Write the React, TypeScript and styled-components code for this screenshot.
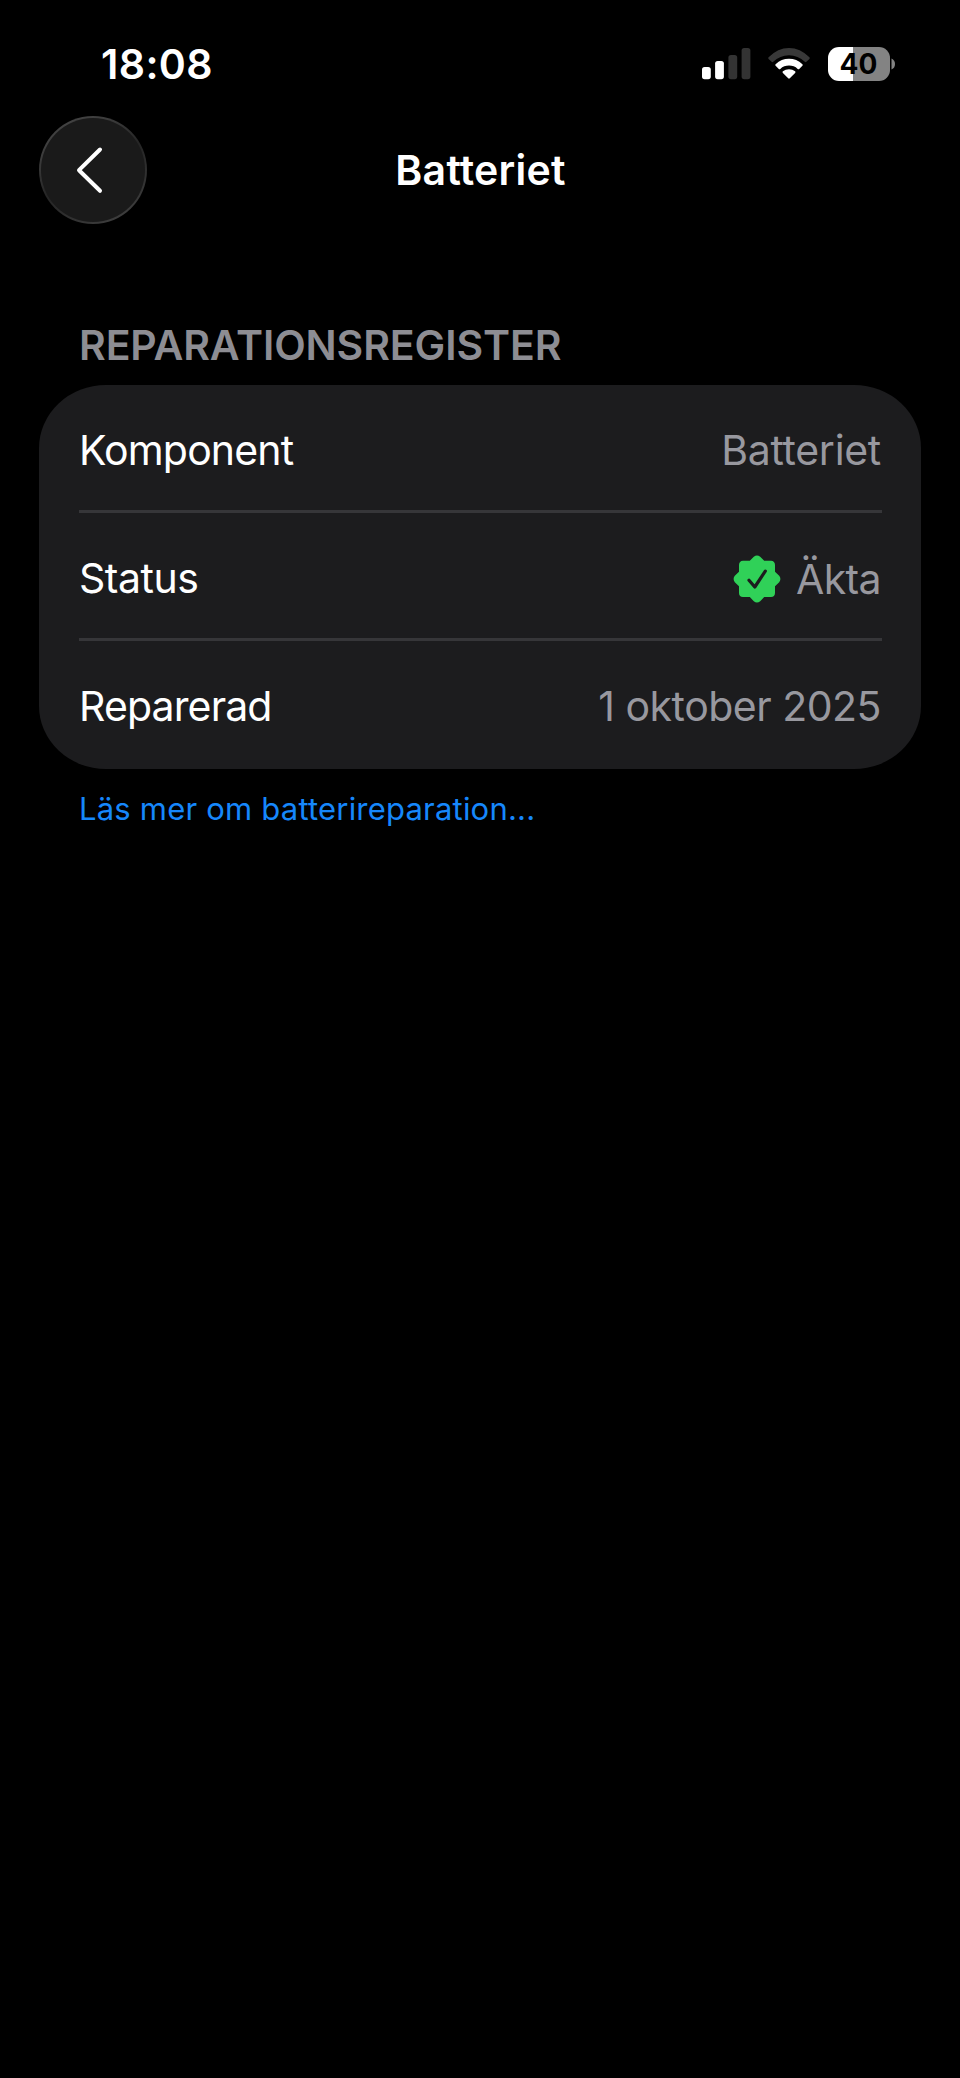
import React from "react";
import styled, { createGlobalStyle } from "styled-components";

const GlobalStyle = createGlobalStyle`
  * { box-sizing: border-box; }
  html, body { margin: 0; background: #000; }
  body {
    color: #fff;
    font-family: Inter, "Liberation Sans", sans-serif;
    font-size: 41px;
  }
`;

const Screen = styled.main`
  display: flex;
  flex-direction: column;
  width: 960px;
  min-height: 2078px;
  background: #000;
`;

const StatusBar = styled.header`
  display: flex;
  align-items: center;
  justify-content: space-between;
  height: 108px;
  padding: 40px 64px 20px 101px;
`;

const Time = styled.time`
  font-weight: 600;
  line-height: 48px;
  letter-spacing: 0.4px;
`;

const Indicators = styled.div`
  display: flex;
  align-items: center;
`;

const CellularIcon = styled.svg`
  width: 49px;
  height: 34px;
  margin-right: 16px;
`;

const WifiIcon = styled.svg`
  width: 44px;
  height: 34px;
  margin-right: 17px;
`;

const Battery = styled.div`
  display: flex;
  align-items: center;
`;

const BatteryBody = styled.div`
  display: flex;
  align-items: center;
  justify-content: center;
  width: 62px;
  height: 34px;
  border-radius: 11px;
  background: linear-gradient(to right, #fff 25px, #838383 25px);
  color: #000;
  font-size: 28px;
  font-weight: 700;
  line-height: 34px;
`;

const BatteryTip = styled.svg`
  width: 5px;
  height: 12px;
  margin-left: 1.5px;
`;

const NavBar = styled.nav`
  display: grid;
  grid-template-columns: 109px 1fr 109px;
  align-items: center;
  height: 124px;
  padding: 0 39px;
`;

const BackButton = styled.button`
  display: flex;
  align-items: center;
  justify-content: center;
  width: 108px;
  height: 108px;
  padding: 0;
  border: 0;
  border-radius: 50%;
  background: linear-gradient(150deg, #484848 0%, #3c3c3c 25%, #252525 50%, #333 75%, #484848 100%);
`;

const BackFace = styled.span`
  display: flex;
  flex: none;
  align-items: center;
  justify-content: center;
  width: 104px;
  height: 104px;
  border-radius: 50%;
  background: #1a1a1a;
`;

const ChevronIcon = styled.svg`
  width: 32px;
  height: 50px;
  margin-right: 6px;
`;

const Title = styled.h1`
  margin: 0;
  padding-left: 1px;
  font-size: 41px;
  font-weight: 600;
  line-height: 50px;
  letter-spacing: 0.23px;
  text-align: center;
`;

const Section = styled.section`
  display: flex;
  flex-direction: column;
  padding: 88px 39px 0;
`;

const SectionHeading = styled.h2`
  margin: 0 0 15px;
  padding-left: 40px;
  color: #8d8d93;
  font-size: 41px;
  font-weight: 600;
  line-height: 50px;
  letter-spacing: -0.1px;
`;

const Card = styled.dl`
  margin: 0;
  padding: 0 39px 0 40px;
  width: 882px;
  height: 384px;
  border-radius: 67px / 63px;
  background: #1c1c1e;
`;

const Row = styled.div`
  display: flex;
  align-items: center;
  justify-content: space-between;
  height: 128px;
  padding-top: 4px;
  border-bottom: 3px solid #363639;

  &:last-child {
    border-bottom: 0;
    padding-top: 1px;
  }
`;

const Label = styled.dt<{ $tracking: number }>`
  line-height: 50px;
  letter-spacing: ${(p) => p.$tracking}px;
`;

const Value = styled.dd<{ $tracking: number; $drop?: number }>`
  display: flex;
  align-items: center;
  margin: 0;
  padding: ${(p) => (p.$drop ?? 0) * 2}px 1px 0 0;
  color: #98989f;
  line-height: 50px;
  letter-spacing: ${(p) => p.$tracking}px;
`;

const SealIcon = styled.svg`
  width: 48px;
  height: 48px;
  margin-right: 15px;
`;

const MoreLink = styled.a`
  align-self: flex-start;
  margin: 20px 0 0 40px;
  color: #1687fb;
  font-size: 31px;
  line-height: 40px;
  letter-spacing: 0.2px;
  text-decoration: none;
`;

const Seal = () => (
  <SealIcon viewBox="-24 -24 48 48" aria-hidden="true">
    <path
      d="M-3.2-22.2Q0-24.6 3.2-22.2L7.2-18.2H14Q17.9-18 18-14V-7.2L22.2-3.2Q24.6 0 22.2 3.2L18 7.2V14Q17.9 17.9 14 18H7.2L3.2 22.2Q0 24.6-3.2 22.2L-7.2 18H-14Q-17.9 17.9-18 14V7.2L-22.2 3.2Q-24.6 0-22.2-3.2L-18-7.2V-14Q-17.9-18-14-18.2H-7.2Z"
      fill="#30d158"
    />
    <path d="M-8 1.2L-2.2 8L8.3-7.9" fill="none" stroke="#1c1c1e" strokeWidth="3.2" strokeLinecap="round" strokeLinejoin="round" />
  </SealIcon>
);

export default function App() {
  return (
    <>
      <GlobalStyle />
      <Screen>
        <StatusBar>
          <Time>18:08</Time>
          <Indicators>
            <CellularIcon viewBox="0 0 49 34" aria-hidden="true">
              <rect x="0" y="20" width="8.8" height="12.2" rx="2.6" fill="#fff" />
              <rect x="13.1" y="14" width="8.8" height="18.2" rx="2.6" fill="#fff" />
              <rect x="26.4" y="8" width="8.8" height="24.2" rx="2.6" fill="#333" />
              <rect x="39.6" y="1" width="8.8" height="31.2" rx="2.6" fill="#333" />
            </CellularIcon>
            <WifiIcon viewBox="0 0 44 34" aria-hidden="true">
              <path d="M1.6 10.3Q10.8 1 22 1T42.4 10.3Q43.2 11.1 42.4 11.9L39.4 14.8Q38.6 15.5 37.8 14.8Q31 8.2 22 8.2T6.2 14.8Q5.4 15.5 4.6 14.8L1.6 11.9Q.8 11.1 1.6 10.3Z" fill="#383838" />
              <path d="M8.6 17.2Q14.4 11.8 22 11.8T35.4 17.2Q36.2 18 35.4 18.8L32.2 21.9Q31.5 22.5 30.7 21.9Q27 18.6 22 18.6T13.3 21.9Q12.5 22.5 11.8 21.9L8.6 18.8Q7.8 18 8.6 17.2Z" fill="#fff" />
              <path d="M15.9 24.2Q18.5 22.2 22 22.2T28.1 24.2Q29 25 28.1 25.9L22.8 31.3Q22 32.1 21.2 31.3L15.9 25.9Q15 25 15.9 24.2Z" fill="#fff" />
            </WifiIcon>
            <Battery>
              <BatteryBody>40</BatteryBody>
              <BatteryTip viewBox="0 0 5 12" aria-hidden="true">
                <path d="M.5.5Q4 2 4 6T.5 11.5Z" fill="#838383" />
              </BatteryTip>
            </Battery>
          </Indicators>
        </StatusBar>
        <NavBar>
          <BackButton aria-label="Tillbaka">
            <BackFace>
              <ChevronIcon viewBox="0 0 32 50" aria-hidden="true">
                <path d="M26 4.5L5 25.2L26 45.8" fill="none" stroke="#fff" strokeWidth="4" strokeLinecap="round" strokeLinejoin="round" />
              </ChevronIcon>
            </BackFace>
          </BackButton>
          <Title>Batteriet</Title>
        </NavBar>
        <Section>
          <SectionHeading>REPARATIONSREGISTER</SectionHeading>
          <Card>
            <Row>
              <Label $tracking={-0.85}>Komponent</Label>
              <Value $tracking={-0.3}>Batteriet</Value>
            </Row>
            <Row>
              <Label $tracking={-0.46}>Status</Label>
              <Value $tracking={-0.6} $drop={1}>
                <Seal />
                Äkta
              </Value>
            </Row>
            <Row>
              <Label $tracking={-0.87}>Reparerad</Label>
              <Value $tracking={-0.5}>1 oktober 2025</Value>
            </Row>
          </Card>
          <MoreLink>Läs mer om batterireparation...</MoreLink>
        </Section>
      </Screen>
    </>
  );
}
